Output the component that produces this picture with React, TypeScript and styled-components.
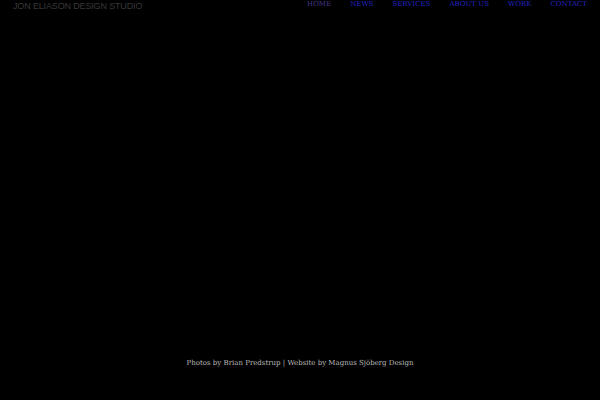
import React from "react";
import styled, { createGlobalStyle } from "styled-components";

const Global = createGlobalStyle`
  html, body { margin: 0; padding: 0; background: #000; height: 100%; }
  #root { height: 100%; }
`;

const Page = styled.div`
  width: 600px;
  height: 400px;
  background: #000;
  display: flex;
  flex-direction: column;
`;

const Header = styled.header`
  display: flex;
  justify-content: space-between;
  align-items: flex-start;
  height: 20px;
`;

const Title = styled.h1`
  margin: 0;
  padding: 1px 0 0 13px;
  font-family: "Liberation Sans", Arial, sans-serif;
  font-size: 9px;
  font-weight: normal;
  line-height: 10px;
  letter-spacing: -0.15px;
  color: #383838;
`;

const Nav = styled.nav`
  display: flex;
  gap: 19px;
  padding-right: 13px;
`;

const NavLink = styled.a<{ $visited?: boolean }>`
  font-family: "DejaVu Serif", serif;
  font-size: 7px;
  line-height: 9px;
  text-transform: uppercase;
  text-decoration: none;
  color: ${(p) => (p.$visited ? "#45378a" : "#2424c4")};
`;

const Main = styled.main`
  flex: 1;
`;

const Footer = styled.footer`
  height: 41px;
  text-align: center;
  font-family: "DejaVu Serif", serif;
  font-size: 7px;
  color: #bbb;
`;

export default function App() {
  const items = ["Home", "News", "Services", "About us", "Work", "Contact"];
  return (
    <>
      <Global />
      <Page>
        <Header>
          <Title>JON ELIASON DESIGN STUDIO</Title>
          <Nav>
            {items.map((t, i) => (
              <NavLink key={t} href="#" $visited={i === 0}>
                {t}
              </NavLink>
            ))}
          </Nav>
        </Header>
        <Main />
        <Footer>Photos by Brian Predstrup | Website by Magnus Sjöberg Design</Footer>
      </Page>
    </>
  );
}
